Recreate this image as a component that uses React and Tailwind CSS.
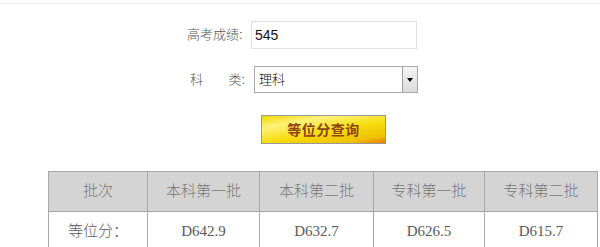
import React from 'react';

const cols = [
    { head: '批次', val: '等位分：', w: 'w-[99px]' },
    { head: '本科第一批', val: 'D642.9', w: 'w-[112px]' },
    { head: '本科第二批', val: 'D632.7', w: 'w-[114px]' },
    { head: '专科第一批', val: 'D626.5', w: 'w-[111px]' },
    { head: '专科第二批', val: 'D615.7', w: 'w-[113px]' },
];

export default function App() {
    return (
        <div className="w-[600px] h-[247px] overflow-hidden bg-white font-['Liberation_Sans','Noto_Sans_CJK_SC',sans-serif]">
            <div className="h-[4px] border-b border-[#eeeeee]"></div>

            {/* score */}
            <div className="mt-[17px] flex items-center h-[28px]">
                <span className="ml-[187px] w-[64px] text-[13px] font-light text-[#555]">高考成绩:</span>
                <div className="w-[166px] h-[28px] border border-[#e2e2e2] flex items-center pl-[3px] text-[14px] text-[#111]">545</div>
            </div>

            {/* subject */}
            <div className="mt-[17px] flex items-center h-[27px]">
                <div className="ml-[190px] w-[55px] flex justify-between text-[13px] font-light text-[#555]">
                    <span>科</span>
                    <span>类:</span>
                </div>
                <div className="ml-[9px] w-[164px] h-[27px] border border-[#a9a9a9] flex">
                    <div className="flex-1 flex items-center pl-[4px] text-[13px] font-light text-[#111]">理科</div>
                    <div className="w-[15px] h-full border-l border-[#a0a0a0] bg-[linear-gradient(#f4f4f4,#dcdcdc)] flex items-center justify-center">
                        <div className="w-0 h-0 border-l-[3px] border-r-[3px] border-t-[4px] border-l-transparent border-r-transparent border-t-black"></div>
                    </div>
                </div>
            </div>

            {/* query button */}
            <div className="mt-[22px] ml-[261px]">
                <button className="w-[125px] h-[29px] border border-[#999] bg-[linear-gradient(170deg,#f2d800_0%,#fff27a_25%,#f6dd10_55%,#f1c000_85%,#ec7a00_100%)] text-[14px] font-bold text-[#8f4418] font-['Noto_Sans_CJK_SC',sans-serif] tracking-[0.5px]">
                    等位分查询
                </button>
            </div>

            {/* result table */}
            <table className="mt-[27px] ml-[48px] border-collapse text-[15px] text-[#5a5a5a] font-['Liberation_Serif','Noto_Sans_CJK_SC',serif]">
                <tbody>
                    <tr className="bg-[#d4d4d4] h-[40px]">
                        {cols.map((c) => (
                            <td key={c.head} className={`${c.w} border border-[#a8a8a8] text-center font-light text-[#777]`}>{c.head}</td>
                        ))}
                    </tr>
                    <tr className="h-[40px]">
                        {cols.map((c) => (
                            <td key={c.val} className={`${c.w} border border-[#a8a8a8] text-center font-light`}>{c.val}</td>
                        ))}
                    </tr>
                </tbody>
            </table>
        </div>
    );
}
